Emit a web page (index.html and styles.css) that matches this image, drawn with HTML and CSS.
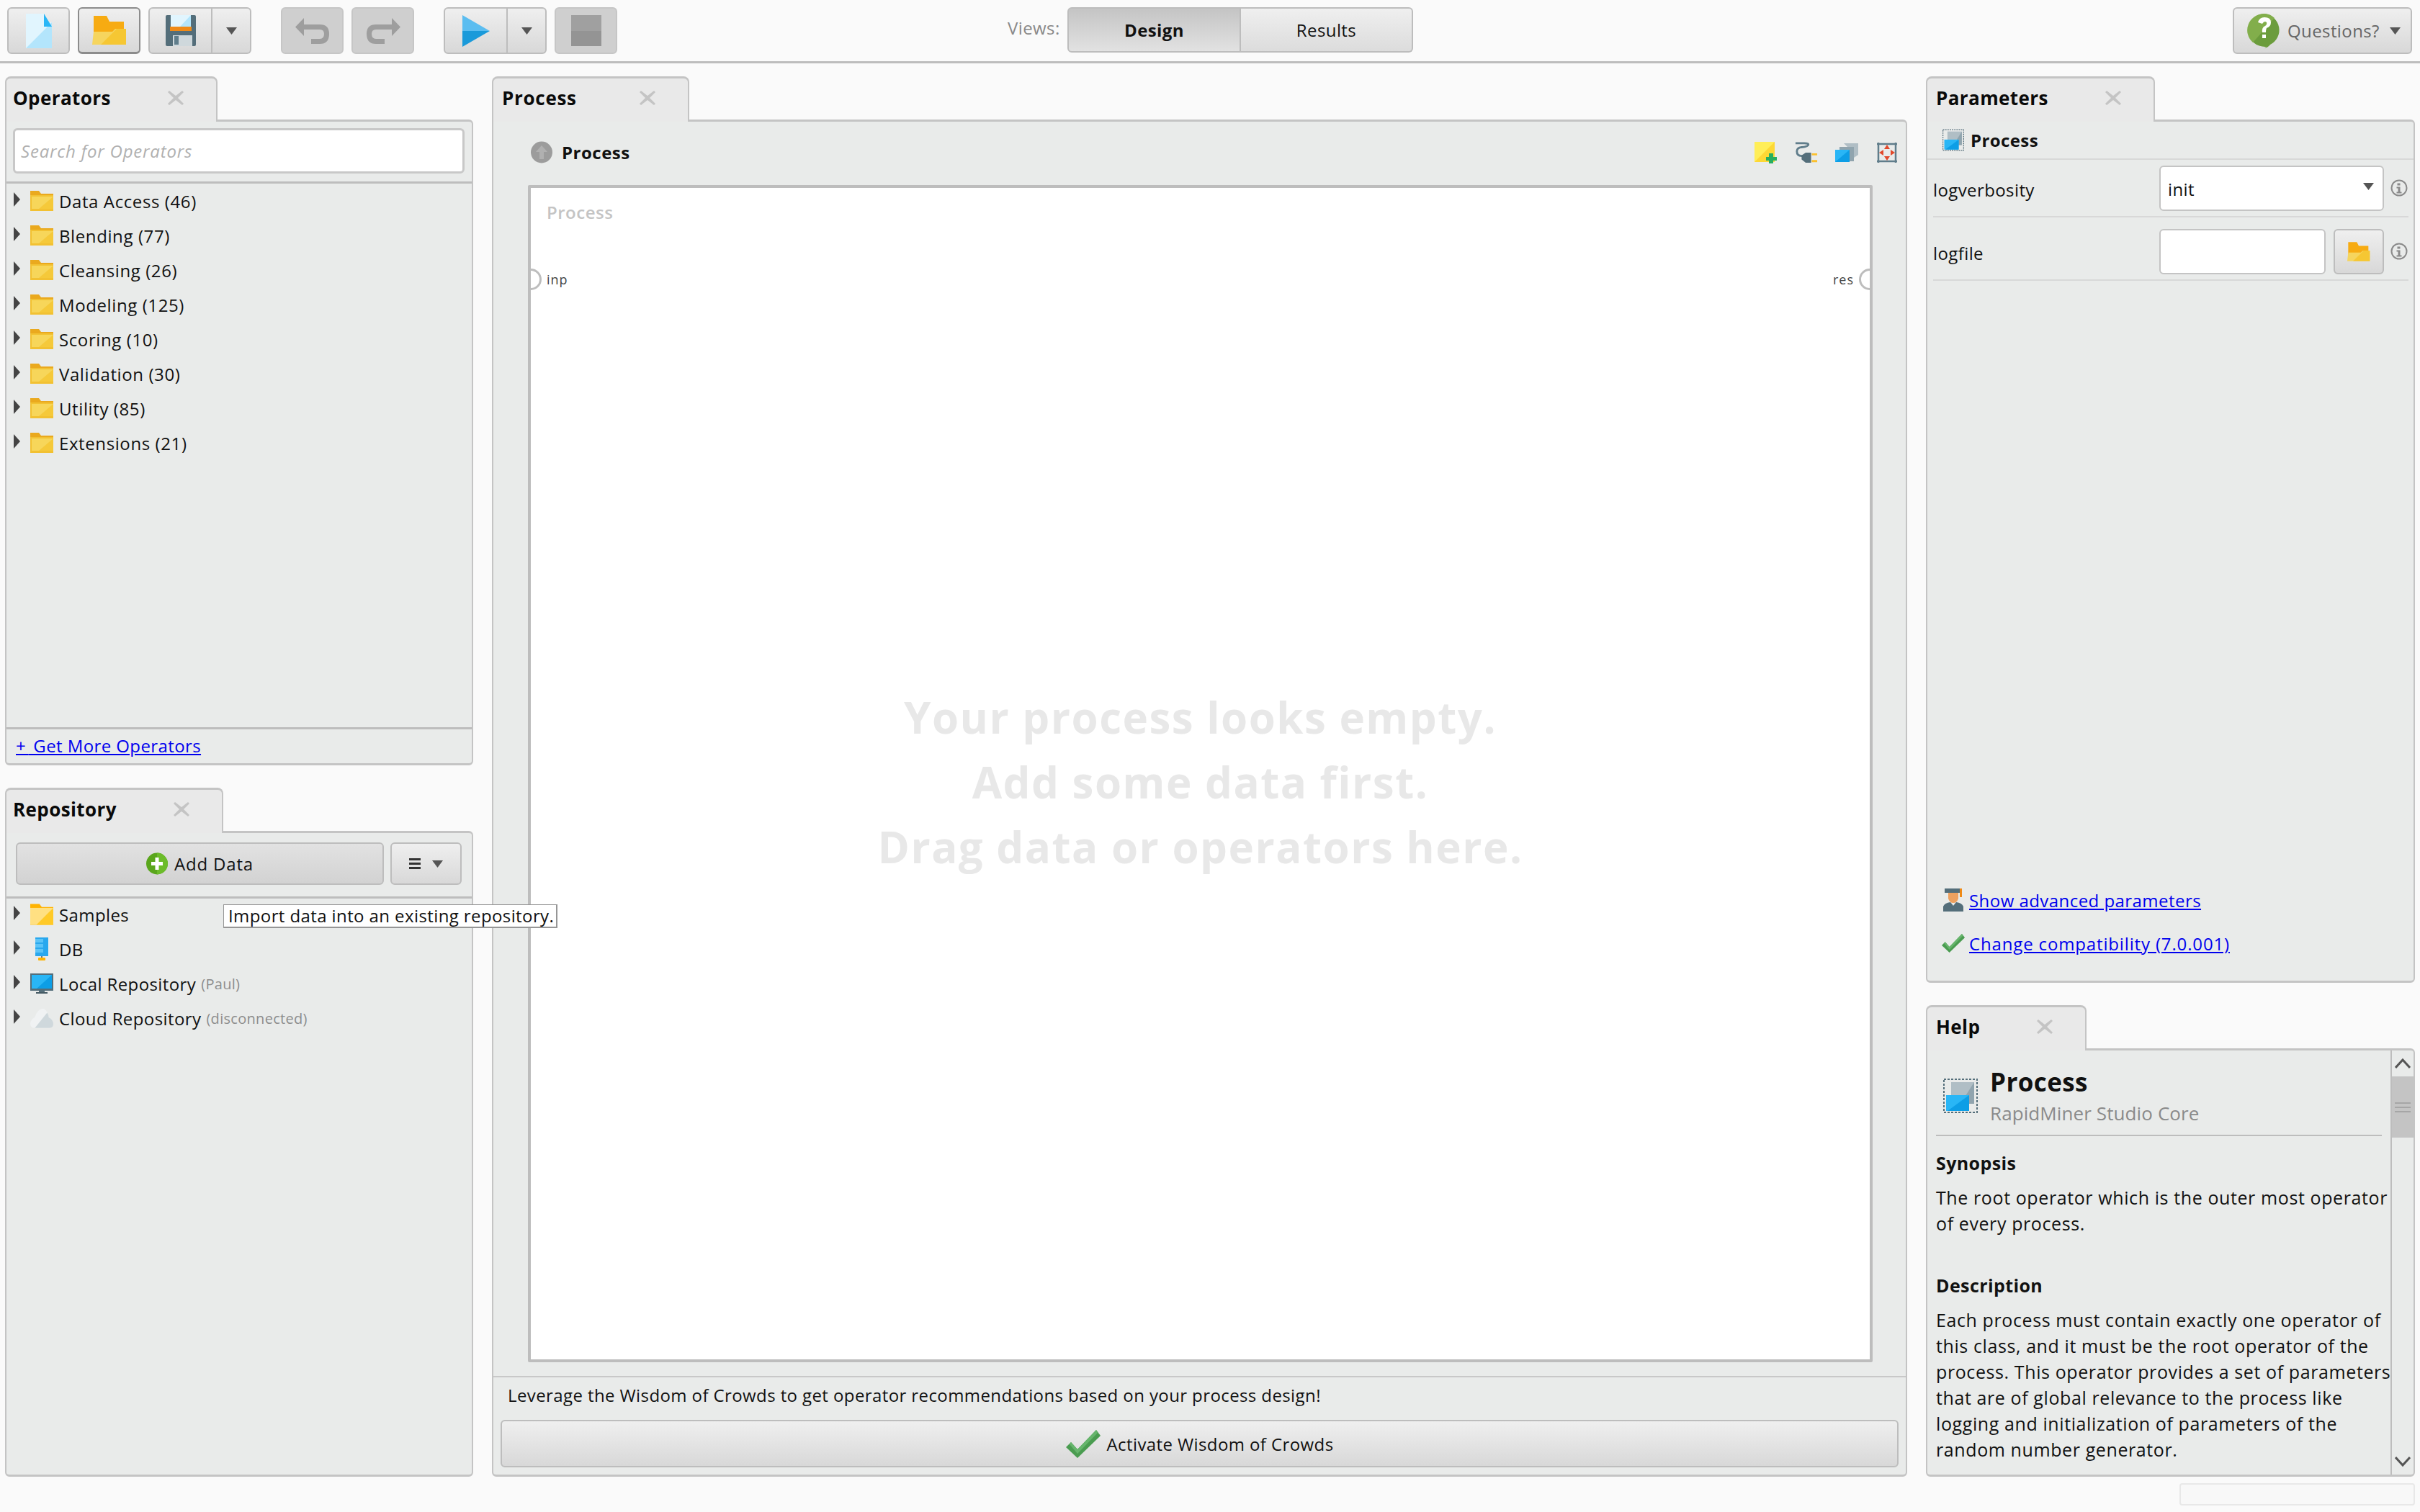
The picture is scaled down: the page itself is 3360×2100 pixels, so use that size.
FILE: index.html
```html
<!DOCTYPE html>
<html>
<head>
  <title>RapidMiner Studio</title>
  <link rel="stylesheet" href="styles.css">
</head>
<body>
  <svg class="icon-defs" width="0" height="0">
    <defs>
      <symbol id="i-new" viewBox="0 0 36 48"><path d="M0 0H25V12H36V48H0Z" fill="#e1f5fe"/><path d="M36 12V48H0Z" fill="#b3e5fc"/><path d="M25 0L36 18H25Z" fill="#29b6f6"/></symbol>
      <symbol id="i-open" viewBox="0 0 48 40"><path d="M2 0H20L24 8H44V30H2Z" fill="#f7ab12"/><path d="M47 18V40H0L2 22H28L32 18Z" fill="#f6d55e"/><path d="M47 18V40H12L34 18Z" fill="#f6c733"/></symbol>
      <symbol id="i-save" viewBox="0 0 42 43"><rect width="42" height="43" rx="2" fill="#546e7a"/><rect x="7" width="28" height="16" fill="#e1f5fe"/><path d="M35 0V16H20Z" fill="#b3e5fc"/><rect x="6" y="16" width="30" height="6" fill="#ef8a17"/><rect x="10" y="28" width="27" height="15" fill="#cfd8dc"/><rect x="12" y="29" width="6" height="12" fill="#607d8b"/></symbol>
      <symbol id="i-undo" viewBox="0 0 48 36"><path d="M12 0V9H34Q47 9 47 22Q47 36 34 36H22V29H34Q40 29 40 22Q40 16 34 16H12V25L0 12.500Z" fill="#9e9e9e"/></symbol>
      <symbol id="i-redo" viewBox="0 0 48 36"><path d="M36 0V9H14Q1 9 1 22Q1 36 14 36H26V29H14Q8 29 8 22Q8 16 14 16H36V25L48 12.500Z" fill="#9e9e9e"/></symbol>
      <symbol id="i-play" viewBox="0 0 38 44"><path d="M0 0L38 22H0Z" fill="#5bbdf0"/><path d="M0 22H38L0 44Z" fill="#1a9ada"/></symbol>
      <symbol id="i-stop" viewBox="0 0 42 43"><rect width="42" height="22" fill="#a0a0a0"/><rect y="22" width="42" height="21" fill="#949494"/></symbol>
      <symbol id="i-close" viewBox="0 0 22 20"><path d="M2 0L11 7 20 0 22 2 14 10 22 18 20 20 11 13 2 20 0 18 8 10 0 2Z" fill="#c4c4c4"/></symbol>
      <symbol id="i-arrow" viewBox="0 0 10 20"><path d="M1 0L10 10 1 20Z" fill="#444"/></symbol>
      <symbol id="i-caret" viewBox="0 0 15 10"><path d="M0 0H15L7.500 10Z" fill="#555"/></symbol>
      <symbol id="i-folder" viewBox="0 0 32 28"><path d="M0 0H12L15 4H32V28H0Z" fill="#eaa91e"/><rect x="0" y="6" width="32" height="22" fill="#f2c132"/><path d="M2 8H32V25H2Z" fill="#f7d65a"/><path d="M32 8V25H12Z" fill="#f5c93a"/></symbol>
      <symbol id="i-sample" viewBox="0 0 30 27"><path d="M0 0H12L15 4H30V27H0Z" fill="#ffb300"/><path d="M0 5H30V27H0Z" fill="#ffe082"/><path d="M30 5V27H8Z" fill="#ffca28"/></symbol>
      <symbol id="i-db" viewBox="0 0 18 32"><rect width="18" height="26" fill="#29a8ee"/><path d="M0 2H11V7H0ZM0 9H11V14H0ZM0 16H11V21H0Z" fill="#5cc4f7"/><rect x="8" y="26" width="2" height="3" fill="#607d8b"/><rect x="4" y="28" width="10" height="4" rx="1" fill="#ffb300"/></symbol>
      <symbol id="i-monitor" viewBox="0 0 32 28"><rect width="32" height="24" fill="#546e7a"/><rect x="2" y="2" width="28" height="19" fill="#29b6f6"/><path d="M30 2V21H9Z" fill="#0d9ee6"/><rect x="12" y="24" width="8" height="3" fill="#546e7a"/><rect x="8" y="26" width="16" height="2" fill="#455a64"/></symbol>
      <symbol id="i-cloud" viewBox="0 0 30 26"><path d="M6 26Q0 26 0 20Q1 14 6 12Q10 0 18 1Q23 4 24 12Q30 15 30 21Q30 26 24 26Z" fill="#f0f2f3"/><path d="M6 26L22 6Q24 9 24 12Q30 15 30 21Q30 26 24 26Z" fill="#cfd8dc"/></symbol>
      <symbol id="i-plus" viewBox="0 0 30 31"><circle cx="15" cy="15.500" r="15" fill="#5aa61c"/><path d="M15 0.500A15 15 0 0 1 15 30.500Z" fill="#6cbc2a"/><path d="M12.500 7H17.500V13H23V18H17.500V24H12.500V18H7V13H12.500Z" fill="#fff"/></symbol>
      <symbol id="i-check" viewBox="0 0 48 39"><path d="M0 24L7 17 16 27 42 0 48 8 16 39Z" fill="#4a9c50"/><path d="M7 17L16 27 42 0 44 4 16 33 5 20Z" fill="#66b56c"/></symbol>
      <symbol id="i-process" viewBox="0 0 48 48"><rect x="1" y="1" width="46" height="46" fill="none" stroke="#546e7a" stroke-width="2" stroke-dasharray="3 2"/><rect x="11" y="5" width="32" height="30" fill="#b0bec5"/><path d="M43 5V35H24Z" fill="#90a4ae"/><rect x="4" y="23" width="32" height="22" fill="#29b6f6"/><path d="M36 23V45H6Z" fill="#0d9ee6"/></symbol>
      <symbol id="i-up" viewBox="0 0 30 31"><circle cx="15" cy="15.500" r="15" fill="#9c9c9c"/><path d="M15 6L23 15H18V25H12V15H7Z" fill="#b0b0b0"/></symbol>
      <symbol id="i-note" viewBox="0 0 32 30"><path d="M0 0H28V28H0Z" fill="#ffee58"/><path d="M28 0V28H0Z" fill="#fdd835"/><path d="M20 16H26V21H31V26H26V30H20V26H16V21H20Z" fill="#27ae60"/></symbol>
      <symbol id="i-plug" viewBox="0 0 34 32"><path d="M16 21H10Q3 21 3 14Q3 9 10 8Q20 7 20 4Q20 2 14 2H1" fill="none" stroke="#607d8b" stroke-width="3"/><path d="M10 20L16 16H24V31H16L10 26Z" fill="#546e7a"/><path d="M25 17H33V20H25ZM25 27H33V30H25Z" fill="#fbc02d"/></symbol>
      <symbol id="i-cube" viewBox="0 0 32 26"><path d="M12 0H32V16L20 24V8Z" fill="#b0bec5"/><rect x="6" y="5" width="20" height="20" fill="#90a4ae"/><rect y="9" width="20" height="17" fill="#29b6f6"/><path d="M20 9V26H0Z" fill="#0d9ee6"/></symbol>
      <symbol id="i-fit" viewBox="0 0 32 32"><path d="M2 4H30M2 28H30M4 2V30M28 2V30" stroke="#607d8b" stroke-width="2.500" fill="none"/><path d="M16 5L20 11H12ZM16 27L12 21H20ZM5 16L11 12V20ZM27 16L21 20V12Z" fill="#e2492b"/></symbol>
      <symbol id="i-info" viewBox="0 0 24 24"><circle cx="12" cy="12" r="10.500" fill="none" stroke="#8a8a8a" stroke-width="2"/><path d="M9.500 5.500H13.500V8.500H9.500ZM8.500 10.500H13.500V17.500H15.500V19.500H8.500V17.500H10.500V12.500H8.500Z" fill="#8a8a8a"/></symbol>
      <symbol id="i-help" viewBox="0 0 48 48"><path d="M24 0A24 23 0 0 1 32 43Q29 47 24 48Q28 45 26 46A24 23 0 0 1 24 0Z" fill="#6b9c3c"/><path d="M24 0A24 23 0 0 0 8 40L38 6Q32 0 24 0Z" fill="#82ae4b"/><path d="M15 12Q17 5 24 5Q33 5 33 12Q33 18 27 20Q26 22 26 26H21Q20 19 25 17Q28 15 27 12Q24 9 21 14ZM21 29H26V34H21Z" fill="#fff"/></symbol>
      <symbol id="i-grad" viewBox="0 0 28 32"><path d="M2 0H26V6H2Z" fill="#546e7a"/><rect x="23" y="0" width="3" height="12" fill="#ef8a17"/><path d="M7 6H21V14Q19 20 14 20Q9 20 7 14Z" fill="#eea15f"/><path d="M0 32V25Q2 20 10 19L14 24 18 19Q26 20 28 25V32Z" fill="#546e7a"/></symbol>
      <symbol id="i-chev-up" viewBox="0 0 22 14"><path d="M1 13L11 2 21 13" fill="none" stroke="#555" stroke-width="3"/></symbol>
      <symbol id="i-chev-down" viewBox="0 0 22 14"><path d="M1 1L11 12 21 1" fill="none" stroke="#555" stroke-width="3"/></symbol>
    </defs>
  </svg>

  <div class="toolbar">
    <button class="tool"><svg class="ic-new"><use href="#i-new"/></svg></button>
    <button class="tool tool-focus"><svg class="ic-open"><use href="#i-open"/></svg></button>
    <div class="tool-split">
      <button class="split-main"><svg class="ic-save"><use href="#i-save"/></svg></button>
      <button class="split-drop"><svg class="caret"><use href="#i-caret"/></svg></button>
    </div>
    <button class="tool tool-off group-start"><svg class="ic-undo"><use href="#i-undo"/></svg></button>
    <button class="tool tool-off"><svg class="ic-undo"><use href="#i-redo"/></svg></button>
    <div class="tool-split group-start">
      <button class="split-main"><svg class="ic-play"><use href="#i-play"/></svg></button>
      <button class="split-drop"><svg class="caret"><use href="#i-caret"/></svg></button>
    </div>
    <button class="tool tool-off"><svg class="ic-save"><use href="#i-stop"/></svg></button>

    <span class="views-label">Views:</span>
    <div class="views">
      <button class="view view-active">Design</button>
      <button class="view">Results</button>
    </div>

    <button class="questions"><svg class="ic-help"><use href="#i-help"/></svg><span>Questions?</span><svg class="caret"><use href="#i-caret"/></svg></button>
  </div>

  <div class="main">
    <div class="col col-left">
      <section class="dock">
        <div class="dock-tab"><span>Operators</span><svg class="tab-x"><use href="#i-close"/></svg></div>
        <div class="dock-body">
          <div class="search-wrap"><div class="search">Search for Operators</div></div>
          <div class="tree">
            <div class="tree-row"><svg class="arrow"><use href="#i-arrow"/></svg><svg class="ic-tree"><use href="#i-folder"/></svg>Data Access (46)</div>
            <div class="tree-row"><svg class="arrow"><use href="#i-arrow"/></svg><svg class="ic-tree"><use href="#i-folder"/></svg>Blending (77)</div>
            <div class="tree-row"><svg class="arrow"><use href="#i-arrow"/></svg><svg class="ic-tree"><use href="#i-folder"/></svg>Cleansing (26)</div>
            <div class="tree-row"><svg class="arrow"><use href="#i-arrow"/></svg><svg class="ic-tree"><use href="#i-folder"/></svg>Modeling (125)</div>
            <div class="tree-row"><svg class="arrow"><use href="#i-arrow"/></svg><svg class="ic-tree"><use href="#i-folder"/></svg>Scoring (10)</div>
            <div class="tree-row"><svg class="arrow"><use href="#i-arrow"/></svg><svg class="ic-tree"><use href="#i-folder"/></svg>Validation (30)</div>
            <div class="tree-row"><svg class="arrow"><use href="#i-arrow"/></svg><svg class="ic-tree"><use href="#i-folder"/></svg>Utility (85)</div>
            <div class="tree-row"><svg class="arrow"><use href="#i-arrow"/></svg><svg class="ic-tree"><use href="#i-folder"/></svg>Extensions (21)</div>
          </div>
          <div class="more"><a href="#"><span class="more-plus">+</span> Get More Operators</a></div>
        </div>
      </section>

      <section class="dock">
        <div class="dock-tab"><span>Repository</span><svg class="tab-x"><use href="#i-close"/></svg></div>
        <div class="dock-body">
          <div class="repo-actions">
            <button class="add-data"><svg class="ic-plus"><use href="#i-plus"/></svg>Add Data</button>
            <button class="repo-menu"><span class="burger"></span><svg class="caret"><use href="#i-caret"/></svg></button>
          </div>
          <div class="tree repo-tree">
            <div class="tree-row"><svg class="arrow"><use href="#i-arrow"/></svg><svg class="ic-tree"><use href="#i-sample"/></svg>Samples</div>
            <div class="tree-row"><svg class="arrow"><use href="#i-arrow"/></svg><svg class="ic-tree"><use href="#i-db"/></svg>DB</div>
            <div class="tree-row"><svg class="arrow"><use href="#i-arrow"/></svg><svg class="ic-tree"><use href="#i-monitor"/></svg>Local Repository<small>(Paul)</small></div>
            <div class="tree-row"><svg class="arrow"><use href="#i-arrow"/></svg><svg class="ic-tree"><use href="#i-cloud"/></svg>Cloud Repository<small>(disconnected)</small></div>
          </div>
        </div>
      </section>
    </div>

    <section class="dock col-mid">
      <div class="dock-tab tab-spaced"><span>Process</span><svg class="tab-x"><use href="#i-close"/></svg></div>
      <div class="dock-body">
        <div class="proc-head">
          <svg class="ic-up"><use href="#i-up"/></svg>
          <span class="proc-name">Process</span>
          <div class="proc-tools">
            <svg><use href="#i-note"/></svg>
            <svg><use href="#i-plug"/></svg>
            <svg><use href="#i-cube"/></svg>
            <svg><use href="#i-fit"/></svg>
          </div>
        </div>
        <div class="canvas">
          <div class="canvas-title">Process</div>
          <div class="ports">
            <span class="port-label">inp</span>
            <span class="port-label">res</span>
          </div>
          <span class="port port-in"></span>
          <span class="port port-out"></span>
          <div class="empty">Your process looks empty.<br>Add some data first.<br>Drag data or operators here.</div>
        </div>
        <div class="wisdom">
          <p>Leverage the Wisdom of Crowds to get operator recommendations based on your process design!</p>
          <button class="activate"><svg class="ic-check"><use href="#i-check"/></svg>Activate Wisdom of Crowds</button>
        </div>
      </div>
    </section>

    <div class="col col-right">
      <section class="dock dock-params">
        <div class="dock-tab"><span>Parameters</span><svg class="tab-x"><use href="#i-close"/></svg></div>
        <div class="dock-body">
          <div class="param-head"><svg class="ic-op"><use href="#i-process"/></svg>Process</div>
          <div class="param-row">
            <span class="param-name">logverbosity</span>
            <div class="select"><span>init</span><svg class="caret"><use href="#i-caret"/></svg></div>
            <svg class="ic-info"><use href="#i-info"/></svg>
          </div>
          <div class="param-row">
            <span class="param-name">logfile</span>
            <div class="file-input"></div>
            <button class="file-btn"><svg class="ic-small-folder"><use href="#i-open"/></svg></button>
            <svg class="ic-info"><use href="#i-info"/></svg>
          </div>
          <div class="param-links">
            <div class="param-link"><svg class="ic-link"><use href="#i-grad"/></svg><a href="#">Show advanced parameters</a></div>
            <div class="param-link"><svg class="ic-link"><use href="#i-check"/></svg><a href="#">Change compatibility (7.0.001)</a></div>
          </div>
        </div>
      </section>

      <section class="dock dock-help">
        <div class="dock-tab"><span>Help</span><svg class="tab-x"><use href="#i-close"/></svg></div>
        <div class="dock-body help-body">
          <div class="help-text">
            <div class="help-head">
              <svg class="ic-help-op"><use href="#i-process"/></svg>
              <div>
                <div class="help-title">Process</div>
                <div class="help-sub">RapidMiner Studio Core</div>
              </div>
            </div>
            <h4>Synopsis</h4>
            <p>The root operator which is the outer most operator<br>of every process.</p>
            <h4 class="gap">Description</h4>
            <p>Each process must contain exactly one operator of<br>this class, and it must be the root operator of the<br>process. This operator provides a set of parameters<br>that are of global relevance to the process like<br>logging and initialization of parameters of the<br>random number generator.</p>
          </div>
          <div class="scrollbar">
            <div class="chev"><svg class="chev-ic"><use href="#i-chev-up"/></svg></div>
            <div class="thumb"><span class="grip"></span></div>
            <div class="chev chev-down"><svg class="chev-ic"><use href="#i-chev-down"/></svg></div>
          </div>
        </div>
      </section>
    </div>
  </div>

  <div class="status"><div class="status-box"></div></div>

  <div class="tooltip">Import data into an existing repository.</div>
</body>
</html>
```

FILE: styles.css
```css
* {
  box-sizing: border-box;
}

html, body {
  margin: 0;
  height: 2100px;
  overflow: hidden;
}

body {
  position: relative;
  background-color: #fafafa;
  font-family: "Open Sans", sans-serif;
  font-size: 24px;
  letter-spacing: 0.4px;
  color: #111;
}

button {
  font: inherit;
  letter-spacing: inherit;
  color: inherit;
  padding: 0;
  display: flex;
  align-items: center;
  justify-content: center;
}

svg {
  display: block;
  flex: none;
}

.icon-defs {
  position: absolute;
}

a {
  color: #0000ee;
}

/* top toolbar */
.toolbar {
  height: 88px;
  border-bottom: 3px solid #bdbdbd;
  padding: 10px 11px 10px 10px;
  display: flex;
  align-items: flex-start;
  gap: 11px;
}

.tool, .split-main, .split-drop, .questions, .add-data, .repo-menu, .file-btn, .activate {
  background: linear-gradient(#efefef, #d8d8d8);
  border: 2px solid #bdbdbd;
  border-radius: 6px;
}

.tool {
  width: 87px;
  height: 65px;
}

.tool-focus {
  border-color: #8c8c8c;
  border-bottom-width: 3px;
}

.tool-off {
  background: #cfcfcf;
  border-color: #c6c6c6;
}

.group-start {
  margin-left: 30px;
}

.tool-split {
  display: flex;
  width: 143px;
  height: 65px;
}

.split-main {
  width: 89px;
  border-radius: 6px 0 0 6px;
}

.split-drop {
  width: 54px;
  border-left: 0;
  border-radius: 0 6px 6px 0;
}

.caret {
  width: 15px;
  height: 10px;
}

.ic-new { width: 36px; height: 48px; }
.ic-open { width: 48px; height: 40px; }
.ic-save { width: 42px; height: 43px; }
.ic-undo { width: 48px; height: 36px; }
.ic-play { width: 38px; height: 44px; }

.views-label {
  margin-left: 531px;
  width: 72px;
  line-height: 58px;
  color: #888;
}

.views {
  display: flex;
  height: 63px;
}

.view {
  width: 239px;
  background: linear-gradient(#efefef, #dcdcdc);
  border: 2px solid #bdbdbd;
  border-left: 0;
  border-radius: 0 6px 6px 0;
}

.view-active {
  width: 241px;
  font-weight: 700;
  background: linear-gradient(#c4c4c4, #e2e2e2);
  border-left: 2px solid #bdbdbd;
  border-radius: 6px 0 0 6px;
}

.questions {
  margin-left: auto;
  width: 249px;
  height: 65px;
  color: #666;
  justify-content: flex-start;
  padding-left: 18px;
  gap: 8px;
}

.questions .caret {
  margin-left: 6px;
}

.ic-help {
  width: 48px;
  height: 48px;
}

/* dock layout */
.main {
  height: 1963px;
  padding-top: 18px;
  padding-left: 7px;
  display: flex;
}

.col {
  display: flex;
  flex-direction: column;
}

.col-left {
  width: 650px;
  gap: 31px;
}

.col-left .dock {
  height: 957px;
}

.col-left .dock-tab {
  padding-left: 9px;
}

.col-mid {
  margin-left: 26px;
  width: 1965px;
  height: 1945px;
}

.col-right {
  margin-left: 26px;
  width: 679px;
  gap: 31px;
}

.dock {
  display: flex;
  flex-direction: column;
}

.dock-params {
  height: 1259px;
}

.dock-help {
  height: 655px;
}

.dock-tab {
  position: relative;
  z-index: 1;
  align-self: flex-start;
  height: 63px;
  margin-bottom: -3px;
  padding: 0 45px 6px 12px;
  display: flex;
  align-items: center;
  gap: 79px;
  background-color: #e9e9e9;
  border: 2px solid #c4c4c4;
  border-top-width: 3px;
  border-bottom: 0;
  border-radius: 8px 8px 0 0;
  font-size: 26px;
  font-weight: 700;
  letter-spacing: 0.4px;
  color: #0a0a0a;
}

.tab-spaced {
  letter-spacing: 0.7px;
  gap: 87px;
}

.tab-x {
  width: 22px;
  height: 20px;
}

.dock-body {
  flex: 1;
  min-height: 0;
  display: flex;
  flex-direction: column;
  background-color: #e9ebea;
  border: 2px solid #c4c4c4;
  border-width: 3px 2px;
  border-radius: 0 6px 6px 6px;
}

/* operators and repository */
.search-wrap {
  height: 86px;
  padding: 9px 10px 0 9px;
  border-bottom: 3px solid #bdbdbd;
}

.search {
  height: 63px;
  padding-left: 8px;
  line-height: 57px;
  background-color: #fff;
  border: 3px solid #c8c8c8;
  border-radius: 6px;
  font-style: italic;
  letter-spacing: 0.8px;
  color: #b0b0b0;
}

.tree {
  flex: 1;
}

.repo-tree {
  margin-top: -2px;
  letter-spacing: 0.4px;
}

.tree-row {
  height: 48px;
  display: flex;
  align-items: center;
  padding-left: 9px;
  letter-spacing: 0.6px;
  color: #111;
}

.repo-tree .tree-row {
  letter-spacing: 0.4px;
}

.arrow {
  width: 10px;
  height: 20px;
  margin-top: -4px;
  margin-right: 14px;
}

.ic-tree {
  width: 32px;
  height: 32px;
  margin-right: 8px;
}

.tree-row small {
  margin-left: 7px;
  font-size: 20px;
  letter-spacing: 0.3px;
  color: #8d8d8d;
}

.more {
  height: 50px;
  border-top: 3px solid #bdbdbd;
  padding-left: 13px;
  line-height: 46px;
  letter-spacing: 0.4px;
}

.more-plus {
  letter-spacing: 4px;
}

.repo-actions {
  height: 91px;
  padding: 13px 14px 0 13px;
  display: flex;
  gap: 9px;
  border-bottom: 3px solid #bdbdbd;
  flex: none;
}

.add-data {
  width: 511px;
  height: 59px;
  gap: 9px;
  letter-spacing: 0.8px;
  background: linear-gradient(#e2e2e2, #d2d2d2);
}

.ic-plus {
  width: 30px;
  height: 31px;
}

.repo-menu {
  width: 99px;
  height: 59px;
  gap: 16px;
}

.burger {
  width: 16px;
  height: 15px;
  border-top: 3px solid #333;
  border-bottom: 3px solid #333;
  background: linear-gradient(#333, #333) center / 100% 3px no-repeat;
}

.tooltip {
  position: absolute;
  left: 310px;
  top: 1256px;
  height: 33px;
  width: 464px;
  padding-left: 6px;
  line-height: 30px;
  background-color: #fff;
  border: 2px solid #969696;
  border-width: 1px 2px 2px 1px;
  white-space: nowrap;
}

/* process */
.proc-head {
  height: 88px;
  flex: none;
  display: flex;
  align-items: center;
  padding: 0 10px 3px 52px;
}

.ic-up {
  width: 30px;
  height: 31px;
}

.proc-name {
  margin-left: 13px;
  font-weight: 700;
  letter-spacing: 0.5px;
}

.proc-tools {
  margin-left: auto;
  display: flex;
  gap: 24px;
}

.proc-tools svg {
  width: 32px;
  height: 32px;
}

.canvas {
  position: relative;
  flex: 1;
  margin: 0 46px 19px 48px;
  background-color: #fff;
  border: 4px solid #bdbdbd;
  border-radius: 2px;
  display: flex;
  flex-direction: column;
}

.canvas-title {
  margin: 17px 0 0 22px;
  color: #c4c4c4;
  font-weight: 600;
  letter-spacing: 0.5px;
}

.ports {
  display: flex;
  justify-content: space-between;
  margin-top: 65px;
  padding: 0 22px;
  font-size: 18px;
  letter-spacing: 1px;
  color: #444;
}

.port {
  position: absolute;
  top: 112px;
  width: 30px;
  height: 30px;
  background-color: #fff;
  border: 3px solid #bdbdbd;
  border-radius: 50%;
}

.port-in {
  left: -15px;
  clip-path: inset(0 0 0 15px);
}

.port-out {
  right: -15px;
  clip-path: inset(0 15px 0 0);
}

.empty {
  flex: 1;
  padding-top: 551px;
  font-size: 60px;
  font-weight: 700;
  line-height: 90px;
  letter-spacing: 1.5px;
  text-align: center;
  color: #e8e8e8;
}

.wisdom {
  flex: none;
  height: 137px;
  border-top: 2px solid #c8c8c8;
  padding: 0 10px;
}

.wisdom p {
  margin: 0;
  height: 59px;
  line-height: 50px;
  padding-left: 10px;
}

.activate {
  width: 100%;
  height: 66px;
  gap: 9px;
}

.ic-check {
  width: 48px;
  height: 39px;
}

/* parameters */
.param-head {
  height: 53px;
  flex: none;
  display: flex;
  align-items: center;
  gap: 9px;
  padding-left: 21px;
  border-bottom: 2px solid #d8d8d8;
  font-weight: 700;
}

.ic-op {
  width: 30px;
  height: 31px;
}

.param-row {
  height: 80px;
  flex: none;
  margin: 0 7px 0 8px;
  display: flex;
  align-items: center;
  border-bottom: 2px solid #d8d8d8;
}

.param-row + .param-row {
  height: 88px;
  padding-top: 8px;
}

.param-name {
  width: 314px;
  padding-top: 4px;
}

.select {
  width: 312px;
  height: 63px;
  display: flex;
  align-items: center;
  justify-content: space-between;
  padding: 2px 12px 0 10px;
  background-color: #fff;
  border: 2px solid #c4c4c4;
  border-radius: 6px;
}

.select .caret {
  margin-top: -6px;
  height: 12px;
}

.file-input {
  width: 231px;
  height: 63px;
  background-color: #fff;
  border: 2px solid #c4c4c4;
  border-radius: 6px;
}

.file-btn {
  width: 70px;
  height: 63px;
  margin-left: 11px;
}

.ic-small-folder {
  width: 32px;
  height: 27px;
}

.ic-info {
  width: 24px;
  height: 24px;
  margin-left: 9px;
}

.param-links {
  margin-top: auto;
  padding: 0 0 22px 20px;
}

.param-link {
  height: 60px;
  display: flex;
  align-items: center;
  gap: 6px;
  letter-spacing: 0.45px;
}

.param-link + .param-link {
  letter-spacing: 0.85px;
}

.ic-link {
  width: 32px;
  height: 32px;
}

/* help */
.help-body {
  flex-direction: row;
  overflow: hidden;
}

.help-text {
  flex: 1;
  padding-left: 12px;
  white-space: nowrap;
}

.help-head {
  height: 119px;
  margin-right: 12px;
  padding: 21px 0 0 10px;
  display: flex;
  gap: 17px;
  border-bottom: 2px solid #bdbdbd;
}

.ic-help-op {
  width: 48px;
  height: 48px;
  margin-top: 18px;
}

.help-title {
  height: 46px;
  line-height: 46px;
  font-size: 35px;
  font-weight: 700;
}

.help-sub {
  line-height: 40px;
  font-size: 26px;
  letter-spacing: 0.1px;
  color: #8a8a8a;
}

.help-text h4 {
  margin: 19px 0 12px;
  line-height: 36px;
  font-size: 25px;
  font-weight: 700;
}

.help-text h4.gap {
  margin-top: 50px;
}

.help-text p {
  margin: 0;
  font-size: 25px;
  line-height: 36px;
  letter-spacing: 0.6px;
}

.scrollbar {
  width: 32px;
  flex: none;
  display: flex;
  flex-direction: column;
  border-left: 2px solid #bdbdbd;
}

.chev {
  height: 36px;
  flex: none;
  display: flex;
  align-items: center;
  justify-content: center;
}

.chev-ic {
  width: 22px;
  height: 14px;
}

.chev-down {
  margin-top: auto;
}

.thumb {
  height: 85px;
  background-color: #c4c4c4;
  display: flex;
  align-items: center;
  justify-content: center;
}

.grip {
  width: 22px;
  height: 14px;
  border-top: 2px solid #a6a6a6;
  border-bottom: 2px solid #a6a6a6;
  background: linear-gradient(#a6a6a6, #a6a6a6) center / 100% 2px no-repeat;
}

/* status bar */
.status {
  display: flex;
  justify-content: flex-end;
  padding: 9px 7px 0 0;
}

.status-box {
  width: 327px;
  height: 31px;
  background-color: #f8f8f8;
  border: 2px solid #e8e8e8;
  border-radius: 4px;
}
```
